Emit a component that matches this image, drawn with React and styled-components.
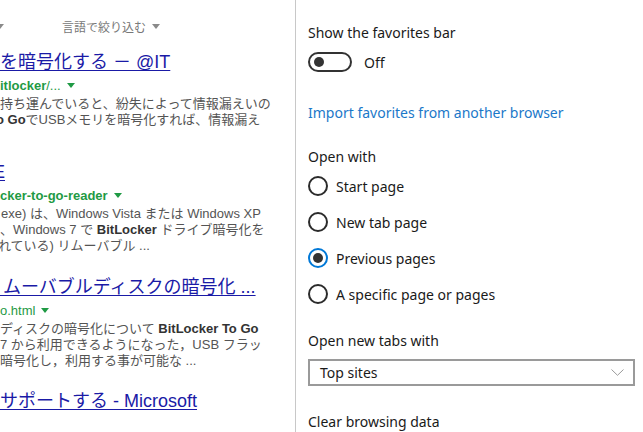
import styled, { createGlobalStyle } from "styled-components";

const GlobalStyle = createGlobalStyle`
  html, body {
    margin: 0;
    padding: 0;
    background: #ffffff;
    overflow: hidden;
  }
`;

const Latin = styled.span`
  font-family: "Liberation Sans", sans-serif;
`;

const results = [
  {
    top: 14,
    title: "を暗号化する － @IT",
    url: <><b>itlocker</b>/...</>,
    lines: [
      { text: "持ち運んでいると、紛失によって情報漏えいの" },
      { text: <><b>To Go</b>でUSBメモリを暗号化すれば、情報漏え</>, indent: -11 },
    ],
  },
  {
    top: 32,
    title: "E",
    titleIndent: -7,
    url: <b>cker-to-go-reader</b>,
    lines: [
      { text: "exe) は、Windows Vista または Windows XP", indent: 1 },
      { text: <>、Windows 7 で <b>BitLocker</b> ドライブ暗号化を</> },
      { text: "れている) リムーバブル ...", indent: -2 },
    ],
  },
  {
    top: 21,
    title: "\u00a0ムーバブルディスクの暗号化 ...",
    titleIndent: -2,
    url: "o.html",
    lines: [
      { text: <>ディスクの暗号化について <b>BitLocker To Go</b></> },
      { text: "7 から利用できるようになった，USB フラッ" },
      { text: "暗号化し，利用する事が可能な ..." },
    ],
  },
  {
    top: 20,
    title: <>サポートする <Latin>- Microsoft</Latin></>,
  },
];

const openWith = [
  { label: "Start page" },
  { label: "New tab page" },
  { label: "Previous pages", checked: true },
  { label: "A specific page or pages" },
];

function App() {
  return (
    <>
      <GlobalStyle />
      <Page>
        <Results>
          <FilterBar>
            <Caret $color="#8a8a8a" $ml={-4} />
            <FilterItem>
              言語で絞り込む
              <Caret $color="#8a8a8a" />
            </FilterItem>
          </FilterBar>
          {results.map((r, i) => (
            <Result key={i} $top={r.top}>
              <Title $indent={r.titleIndent || 0}>{r.title}</Title>
              {r.url && (
                <Url>
                  {r.url}
                  <Caret $color="#1f9a44" />
                </Url>
              )}
              {r.lines &&
                r.lines.map((l, j) => (
                  <Snippet key={j} $indent={l.indent || 0}>
                    {l.text}
                  </Snippet>
                ))}
            </Result>
          ))}
        </Results>

        <Settings>
          <Label>Show the favorites bar</Label>
          <ToggleRow>
            <Toggle>
              <Knob />
            </Toggle>
            <span>Off</span>
          </ToggleRow>
          <Link>Import favorites from another browser</Link>

          <Label $top={24}>Open with</Label>
          <RadioList>
            {openWith.map((o) => (
              <RadioRow key={o.label}>
                <Radio $checked={o.checked} />
                <span>{o.label}</span>
              </RadioRow>
            ))}
          </RadioList>

          <Label $top={19}>Open new tabs with</Label>
          <Select>
            <span>Top sites</span>
            <svg width="13" height="7" viewBox="0 0 13 7">
              <path d="M0.5 0.5 L6.5 6.3 L12.5 0.5" fill="none" stroke="#9a9a9a" strokeWidth="1" />
            </svg>
          </Select>

          <Label $top={26}>Clear browsing data</Label>
        </Settings>
      </Page>
    </>
  );
}

const Page = styled.div`
  display: flex;
  width: 643px;
  height: 432px;
  overflow: hidden;
  background: #ffffff;
`;

const Results = styled.div`
  flex: none;
  width: 295px;
  overflow: hidden;
  font-family: "Liberation Sans", "Noto Sans CJK JP", sans-serif;
  white-space: nowrap;
`;

const FilterBar = styled.div`
  display: flex;
  align-items: center;
  height: 20px;
  margin-top: 16px;
  font-size: 12px;
  color: #777777;
`;

const FilterItem = styled.span`
  margin-left: 58px;
  display: inline-flex;
  align-items: center;
`;

const Caret = styled.span`
  display: inline-block;
  width: 0;
  height: 0;
  border-left: 4px solid transparent;
  border-right: 4px solid transparent;
  border-top: 5px solid ${(p) => p.$color};
  margin-left: ${(p) => (p.$ml !== undefined ? p.$ml : 6)}px;
  vertical-align: middle;
`;

const Result = styled.div`
  margin-top: ${(p) => p.$top}px;
`;

const Title = styled.div`
  height: 24px;
  line-height: 24px;
  font-size: 18px;
  color: #1a1aa6;
  text-decoration: underline;
  text-decoration-thickness: 1px;
  text-underline-offset: 2px;
  text-indent: ${(p) => p.$indent}px;
`;

const Url = styled.div`
  display: flex;
  align-items: center;
  height: 22px;
  font-size: 13px;
  color: #1f9a44;
  b {
    font-weight: 700;
  }
`;

const Snippet = styled.div`
  height: 16px;
  line-height: 16px;
  font-size: 13px;
  color: #545454;
  text-indent: ${(p) => p.$indent}px;
  b {
    color: #333333;
    font-weight: 700;
  }
`;

const Settings = styled.div`
  flex: 1;
  display: flex;
  flex-direction: column;
  align-items: flex-start;
  border-left: 1px solid #c8c8c8;
  padding: 23px 0 0 12px;
  font-family: "Segoe UI", "Noto Sans", sans-serif;
  font-size: 14px;
  color: #1a1a1a;
`;

const Label = styled.div`
  line-height: 20px;
  margin-top: ${(p) => p.$top || 0}px;
`;

const ToggleRow = styled.div`
  display: flex;
  align-items: center;
  gap: 12px;
  margin-top: 9px;
  height: 20px;
`;

const Toggle = styled.div`
  box-sizing: border-box;
  width: 44px;
  height: 20px;
  border: 2px solid #333333;
  border-radius: 10px;
  display: flex;
  align-items: center;
  padding-left: 4px;
`;

const Knob = styled.div`
  width: 10px;
  height: 10px;
  border-radius: 50%;
  background: #333333;
`;

const Link = styled.div`
  margin-top: 31px;
  line-height: 20px;
  color: #1b78c9;
`;

const RadioList = styled.div`
  display: flex;
  flex-direction: column;
  margin-top: 1px;
`;

const RadioRow = styled.div`
  display: flex;
  align-items: center;
  gap: 8px;
  height: 36px;
`;

const Radio = styled.span`
  box-sizing: border-box;
  width: 20px;
  height: 20px;
  border-radius: 50%;
  border: 2px solid ${(p) => (p.$checked ? "#0078d7" : "#2b2b2b")};
  display: flex;
  align-items: center;
  justify-content: center;
  &::after {
    content: "";
    width: 10px;
    height: 10px;
    border-radius: 50%;
    background: ${(p) => (p.$checked ? "#333333" : "transparent")};
  }
`;

const Select = styled.div`
  box-sizing: border-box;
  width: 327px;
  height: 31px;
  margin-top: 8px;
  border: 2px solid #9a9a9a;
  display: flex;
  align-items: center;
  justify-content: space-between;
  padding: 0 9px 0 10px;
`;

export default App;
